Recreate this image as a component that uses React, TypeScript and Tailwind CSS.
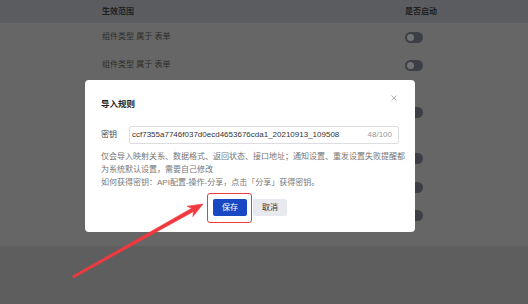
import React from 'react'

const font = { fontFamily: '"Liberation Sans", "Noto Sans CJK SC", sans-serif' }

type Row = { text: string; h: string }

const rows: Row[] = [
  { text: '组件类型 属于 表单', h: 'h-[28px]' },
  { text: '组件类型 属于 表单', h: 'h-[28px]' },
  { text: '', h: 'h-[66px]' },
  { text: '', h: 'h-[26px]' },
  { text: '', h: 'h-[32px]' },
  { text: '', h: 'h-[24px]' },
]

function Toggle() {
  return (
    <div className="relative w-[18px] h-[11px] rounded-full bg-[#3d3f46]">
      <div className="absolute left-[2px] top-[2px] w-[7px] h-[7px] rounded-full bg-[#727272]" />
    </div>
  )
}

export default function App() {
  return (
    <div className="relative w-[528px] h-[304px] overflow-hidden bg-[#666666]" style={font}>
      {/* table behind the mask */}
      <div className="flex flex-col h-full">
        <div className="flex items-center h-[23px] bg-[#5b5c60] pl-[102px] text-[8px] font-bold text-[#1f1f22]">
          <div className="w-[303px]">生效范围</div>
          <div>是否启动</div>
        </div>
        {rows.map((r, i) => (
          <div key={i} className={`flex items-center pl-[102px] text-[8px] text-[#2c2c2c] ${r.h}`}>
            <div className="w-[303px]">{r.text}</div>
            <Toggle />
          </div>
        ))}
        <div className="h-[19px]" />
        <div className="flex-1 bg-[#5e5e5f]" />
      </div>

      {/* dialog */}
      <div className="absolute left-[85px] top-[80px] w-[330px] h-[152px] bg-white rounded-[4px] px-[16px] pt-[18px] pb-[17px]">
        <div className="flex items-start justify-between">
          <div className="text-[8.5px] leading-[12px] font-bold text-[#1f1f1f]">导入规则</div>
          <svg width="6" height="6" viewBox="0 0 6 6" className="mt-[-3px] mr-[2px]">
            <path d="M0.5 0.5 L5.5 5.5 M5.5 0.5 L0.5 5.5" stroke="#9a9a9a" strokeWidth="0.8" />
          </svg>
        </div>
        <div className="flex items-center mt-[16px]">
          <div className="w-[28px] text-[8px] text-[#444]">密钥</div>
          <div className="flex-1 h-[18px] border border-[#dcdde0] rounded-[2px] flex items-center justify-between pl-[2px] pr-[6px] text-[8px]">
            <span className="text-[#333]">ccf7355a7746f037d0ecd4653676cda1_20210913_109508</span>
            <span className="text-[#999]">48/100</span>
          </div>
        </div>
        <div className="mt-[6px] mr-[-8px] text-[8px] leading-[13px] text-[#777] whitespace-nowrap">
          仅会导入映射关系、数据格式、返回状态、接口地址；通知设置、重发设置失败提醒都
          <br />
          为系统默认设置，需要自己修改
          <br />
          如何获得密钥：API配置-操作-分享，点击「分享」获得密钥。
        </div>
        <div className="flex justify-center gap-[6px] mt-[10px]">
          <div className="relative flex">
            <button className="w-[34px] h-[17px] rounded-[2px] bg-[#1848c2] text-white text-[8px] leading-[17px]">保存</button>
            <div className="absolute left-[-6px] right-[-5px] top-[-6px] bottom-[-7px] border-[length:1.5px] border-[color:#ee3a3e] rounded-[3px]" />
          </div>
          <button className="w-[34px] h-[17px] rounded-[2px] bg-[#e7e9ef] text-[#333] text-[8px] leading-[17px]">取消</button>
        </div>
      </div>

      {/* annotation arrow */}
      <svg className="absolute inset-0 pointer-events-none" width="528" height="304" viewBox="0 0 528 304">
        <polygon
          points="72.5,276.1 191.7,208.3 187.1,206.2 203,204 192.9,216.6 193.5,211.5 73.5,277.9"
          fill="#f03a3f"
          strokeLinejoin="round"
          stroke="#f03a3f"
          strokeWidth="0.6"
        />
      </svg>
    </div>
  )
}
